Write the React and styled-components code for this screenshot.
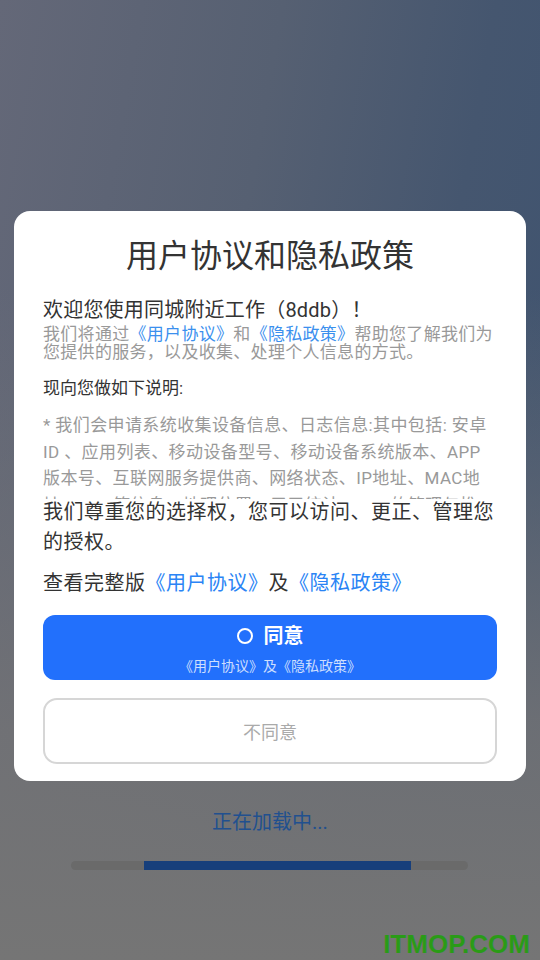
import React from "react";
import styled, { createGlobalStyle } from "styled-components";

const Global = createGlobalStyle`
  html, body { margin: 0; padding: 0; }
  body {
    font-family: Roboto, "Noto Sans CJK SC", sans-serif;
    -webkit-font-smoothing: antialiased;
  }
`;

const Page = styled.div`
  position: relative;
  width: 540px;
  height: 960px;
  overflow: hidden;
  display: flex;
  flex-direction: column;
  align-items: stretch;
  padding-top: 211px;
  box-sizing: border-box;
  background:
    linear-gradient(to bottom, rgba(118,118,118,0) 0%, rgba(118,118,118,0) 30%, rgba(115,115,117,0.85) 75%, #757575 100%),
    linear-gradient(100deg, #646878 0%, #566072 40%, #45566f 70%, #3e5370 100%);
`;

const Card = styled.div`
  margin: 0 14px;
  background: #fff;
  border-radius: 16px;
  padding: 23px 29px 17px;
  display: flex;
  flex-direction: column;
`;

const Title = styled.h1`
  margin: 0;
  font-size: 32px;
  line-height: 44px;
  font-weight: 400;
  color: #333;
  text-align: center;
`;

const Welcome = styled.p`
  margin: 19px 0 0;
  font-size: 20px;
  line-height: 26px;
  color: #333;
  letter-spacing: 0.2px;
`;

const Intro = styled.p`
  margin: 2px 0 0;
  font-size: 17px;
  line-height: 18px;
  color: #999;
  letter-spacing: 0.3px;
`;

const Link = styled.span`
  color: ${p => p.$strong ? "#2a84f5" : "#3b90ee"};
`;

const Scroll = styled.div`
  margin-top: 15px;
  height: 123px;
  overflow: hidden;
`;

const Lead = styled.p`
  margin: 0;
  font-size: 17px;
  line-height: 24px;
  color: #333;
`;

const Detail = styled.p`
  margin: 12px 0 0;
  font-size: 17px;
  line-height: 26.5px;
  color: #999;
  letter-spacing: 0.4px;
`;

const Body = styled.p`
  margin: ${p => p.$gap}px 0 0;
  font-size: 20px;
  line-height: 30px;
  color: #333;
  letter-spacing: 0.5px;
`;

const Agree = styled.button`
  margin-top: 17px;
  height: 65px;
  border: none;
  border-radius: 12px;
  background: #2270fc;
  color: #fff;
  display: flex;
  flex-direction: column;
  align-items: center;
  padding: 8px 0 0;
  font-family: inherit;
  cursor: pointer;
`;

const AgreeLabel = styled.span`
  display: flex;
  align-items: center;
  gap: 11px;
  font-size: 20px;
  line-height: 26px;
  font-weight: 700;
`;

const Ring = styled.span`
  width: 12px;
  height: 12px;
  border: 2px solid #fff;
  border-radius: 50%;
`;

const AgreeSub = styled.span`
  margin-top: 7px;
  font-size: 14px;
  line-height: 20px;
  color: rgba(255,255,255,0.78);
`;

const Disagree = styled.button`
  margin-top: 18px;
  height: 66px;
  border: 2px solid #d6d6d6;
  border-radius: 14px;
  background: #fff;
  color: #aaa;
  font-size: 18px;
  font-family: inherit;
  cursor: pointer;
`;

const Loading = styled.div`
  margin-top: 27px;
  text-align: center;
  font-size: 20px;
  line-height: 28px;
  color: #21508f;
`;

const Track = styled.div`
  margin: 25px 0 0 71px;
  width: 397px;
  height: 9px;
  border-radius: 5px;
  background: #6a6a6a;
  display: flex;
  padding-left: 73px;
  box-sizing: border-box;
`;

const Fill = styled.div`
  height: 100%;
  background: #173f7b;
`;

const Watermark = styled.div`
  position: absolute;
  right: 10px;
  bottom: 3px;
  line-height: 1;
  font-family: "Liberation Sans", Arial, sans-serif;
  font-weight: 700;
  font-size: 26px;
  color: #2a9b17;
`;

export default function App() {
  const progress = 267;
  return (
    <Page>
      <Global />
      <Card>
        <Title>用户协议和隐私政策</Title>
        <Welcome>欢迎您使用同城附近工作（8ddb）！</Welcome>
        <Intro>
          我们将通过<Link>《用户协议》</Link>和<Link>《隐私政策》</Link>帮助您了解我们为您提供的服务，以及收集、处理个人信息的方式。
        </Intro>
        <Scroll>
          <Lead>现向您做如下说明:</Lead>
          <Detail>
            * 我们会申请系统收集设备信息、日志信息:其中包括: 安卓ID 、应用列表、移动设备型号、移动设备系统版本、APP版本号、互联网服务提供商、网络状态、IP地址、MAC地址、IMEI等信息、地理位置，用于统计、APP的管理与推送。
          </Detail>
        </Scroll>
        <Body $gap={-2}>我们尊重您的选择权，您可以访问、更正、管理您的授权。</Body>
        <Body $gap={11}>
          查看完整版<Link $strong>《用户协议》</Link>及<Link $strong>《隐私政策》</Link>
        </Body>
        <Agree>
          <AgreeLabel><Ring />同意</AgreeLabel>
          <AgreeSub>《用户协议》及《隐私政策》</AgreeSub>
        </Agree>
        <Disagree>不同意</Disagree>
      </Card>
      <Loading>正在加载中...</Loading>
      <Track>
        <Fill style={{ width: progress }} />
      </Track>
      <Watermark>ITMOP.COM</Watermark>
    </Page>
  );
}
